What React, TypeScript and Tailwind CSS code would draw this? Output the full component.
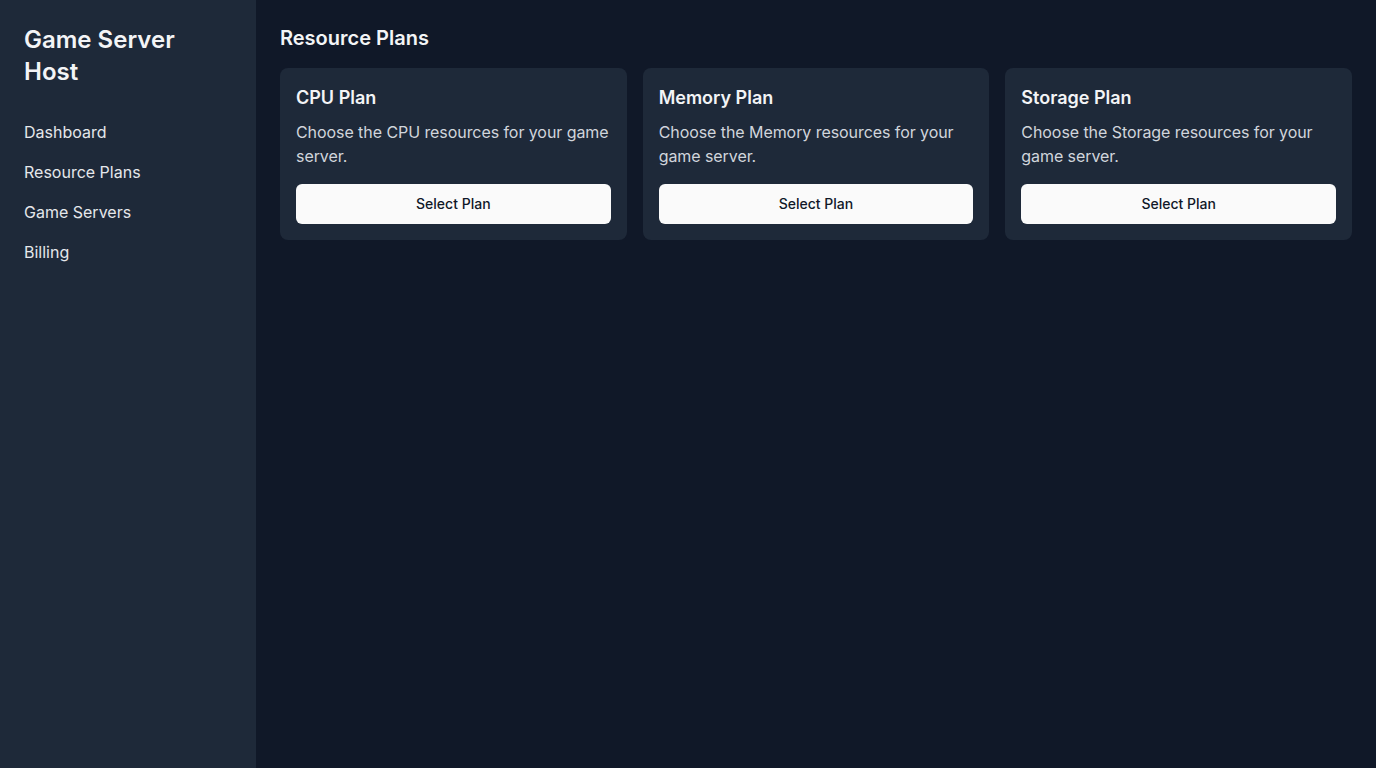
import React from 'react';

const navItems = ['Dashboard', 'Resource Plans', 'Game Servers', 'Billing'];

const plans = [
  { name: 'CPU Plan', resource: 'CPU' },
  { name: 'Memory Plan', resource: 'Memory' },
  { name: 'Storage Plan', resource: 'Storage' },
];

const PlanCard: React.FC<{ name: string; resource: string }> = ({ name, resource }) => (
  <div className="bg-gray-800 rounded-lg p-4">
    <h3 className="text-lg font-semibold text-gray-100 mb-2">{name}</h3>
    <p className="text-base text-gray-300 tracking-[-0.07px]">
      Choose the {resource} resources for your game server.
    </p>
    <button className="mt-4 w-full h-10 rounded-md bg-neutral-50 text-sm font-medium text-gray-900">
      Select Plan
    </button>
  </div>
);

export default function App() {
  return (
    <div className="flex min-h-screen bg-gray-900" style={{ fontFamily: 'Inter, "Noto Sans", sans-serif' }}>
      <aside className="w-64 shrink-0 bg-gray-800 p-6">
        <h1 className="text-2xl font-semibold text-gray-100 mb-8">Game Server Host</h1>
        <nav className="flex flex-col gap-4">
          {navItems.map((item) => (
            <a key={item} href="#" className="text-base text-gray-200">
              {item}
            </a>
          ))}
        </nav>
      </aside>
      <main className="flex-1 p-6">
        <h2 className="text-xl font-semibold text-gray-100 mb-4">Resource Plans</h2>
        <div className="grid grid-cols-3 gap-4">
          {plans.map((p) => (
            <PlanCard key={p.name} name={p.name} resource={p.resource} />
          ))}
        </div>
      </main>
    </div>
  );
}
